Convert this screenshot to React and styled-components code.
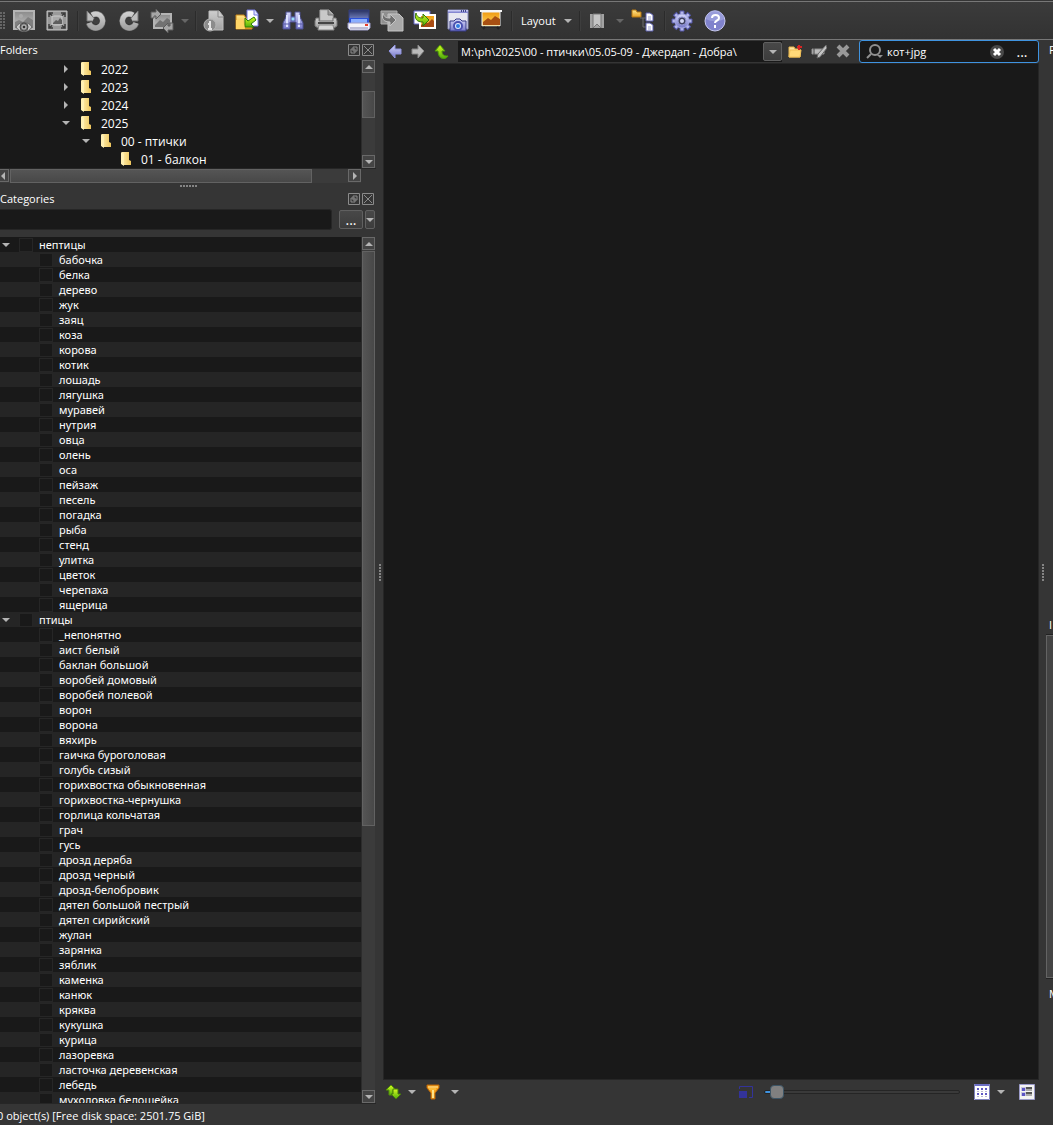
import React from 'react';
import styled, { createGlobalStyle, css } from 'styled-components';

const color = {
  panel: '#353535',
  list: '#191919',
  stripe: '#252525',
  line: '#777777',
  edge: '#262626',
  thumbEdge: '#696969',
  text: '#ffffff',
  arrow: '#b4b4b4',
  focus: '#3f93e0',
};

const animals = [
  'бабочка', 'белка', 'дерево', 'жук', 'заяц', 'коза', 'корова', 'котик', 'лошадь', 'лягушка', 'муравей', 'нутрия',
  'овца', 'олень', 'оса', 'пейзаж', 'песель', 'погадка', 'рыба', 'стенд', 'улитка', 'цветок', 'черепаха', 'ящерица',
];

const birds = [
  '_непонятно', 'аист белый', 'баклан большой', 'воробей домовый', 'воробей полевой', 'ворон', 'ворона', 'вяхирь',
  'гаичка буроголовая', 'голубь сизый', 'горихвостка обыкновенная', 'горихвостка-чернушка', 'горлица кольчатая',
  'грач', 'гусь', 'дрозд деряба', 'дрозд черный', 'дрозд-белобровик', 'дятел большой пестрый', 'дятел сирийский',
  'жулан', 'зарянка', 'зяблик', 'каменка', 'канюк', 'кряква', 'кукушка', 'курица', 'лазоревка',
  'ласточка деревенская', 'лебедь', 'мухоловка белошейка',
];

const categories = [
  { name: 'нептицы', root: true },
  ...animals.map(name => ({ name })),
  { name: 'птицы', root: true },
  ...birds.map(name => ({ name })),
];

const folders = [
  { name: '2022', level: 0, state: 'closed' },
  { name: '2023', level: 0, state: 'closed' },
  { name: '2024', level: 0, state: 'closed' },
  { name: '2025', level: 0, state: 'open' },
  { name: '00 - птички', level: 1, state: 'open' },
  { name: '01 - балкон', level: 2, state: 'leaf' },
];

const GlobalStyle = createGlobalStyle`
  * {
    box-sizing: border-box;
  }

  body {
    margin: 0;
    background: ${color.panel};
    color: ${color.text};
    font: 11px/15px 'Open Sans', 'Noto Sans', sans-serif;
  }

  button, input {
    font: inherit;
    color: inherit;
    margin: 0;
  }

  svg {
    display: block;
    flex: none;
  }
`;

const Window = styled.div`
  display: flex;
  flex-direction: column;
  height: 100vh;
  overflow: hidden;
`;

const Toolbar = styled.div`
  display: flex;
  align-items: center;
  flex: none;
  height: 39px;
  margin-top: 1px;
  border-top: 1px solid ${color.line};
  border-bottom: 1px solid ${color.line};
  background: linear-gradient(#3b3b3b, #323232);
`;

const Grip = styled.div`
  width: 5px;
  height: 18px;
  margin-right: 2px;
  background: repeating-linear-gradient(#666 0 2px, transparent 2px 3px);
  mask: repeating-linear-gradient(90deg, #000 0 2px, transparent 2px 3px);
`;

const Separator = styled.div`
  width: 6px;
  height: 20px;
  border-right: 1px solid #3e3e3e;
  background: linear-gradient(90deg, transparent 4px, #2b2b2b 4px 5px, transparent 5px);
`;

const IconButton = styled.button`
  display: flex;
  align-items: center;
  justify-content: center;
  flex: none;
  width: ${props => props.$width || 33}px;
  height: 24px;
  padding: 0;
  border: 0;
  background: none;
`;

const TextButton = styled.button`
  padding: 0 6px 0 8px;
  border: 0;
  background: none;
`;

const Main = styled.div`
  display: flex;
  flex: 1;
  min-height: 0;
`;

const Sidebar = styled.div`
  display: flex;
  flex-direction: column;
  width: 376px;
  flex: none;
`;

const PanelTitle = styled.div`
  display: flex;
  align-items: center;
  height: 20px;
  flex: none;
  padding-right: 1px;
  line-height: 20px;
`;

const PanelName = styled.span`
  flex: 1;
`;

const ScrollArea = styled.div`
  display: flex;
  flex: ${props => (props.$grow ? '1' : 'none')};
  min-height: 0;
  border-bottom: 1px solid ${color.edge};
`;

const Rows = styled.div`
  flex: 1;
  overflow: hidden;
  background: ${color.list};
`;

const FolderRow = styled.div`
  display: flex;
  align-items: center;
  height: 18px;
  padding-left: ${props => 60 + props.$level * 20}px;
  font-size: 12px;
`;

const Twisty = styled.span`
  display: flex;
  justify-content: center;
  width: ${props => props.$width || 12}px;
`;

const FolderName = styled.span`
  margin-left: 1px;
`;

const CategoryRow = styled.label`
  display: flex;
  align-items: center;
  height: 15px;
  padding-left: ${props => (props.$root ? 0 : 39)}px;
  font-family: 'Noto Sans', sans-serif;

  &:nth-child(even) {
    background: ${color.stripe};
  }
`;

const Check = styled.input`
  appearance: none;
  width: 14px;
  height: 14px;
  margin-left: ${props => (props.$root ? 7 : 0)}px;
  margin-right: 6px;
  border: 1px solid #262626;
  background: ${color.list};
`;

const Bar = styled.div`
  display: flex;
  flex-direction: ${props => (props.$horizontal ? 'row' : 'column')};
  flex: none;
  ${props => (props.$horizontal ? css`height: 14px;` : css`width: 14px;`)}
  margin-left: ${props => (props.$horizontal ? -5 : 0)}px;
  margin-right: ${props => (props.$horizontal ? 15 : 1)}px;
  border-left: 1px solid #2c2c2c;
  background: #3b3b3b;
`;

const BarButton = styled.button`
  display: flex;
  align-items: center;
  justify-content: center;
  width: 13px;
  height: 13px;
  flex: none;
  padding: 0;
  border: 1px solid ${color.thumbEdge};
  background: #444;
`;

const Space = styled.div`
  flex: ${props => props.$part};
`;

const Thumb = styled.div`
  flex: ${props => props.$part};
  margin: ${props => (props.$horizontal ? '0 1px' : '1px 0')};
  border: 1px solid #626262;
  background: linear-gradient(${props => (props.$horizontal ? '180deg' : '90deg')}, #555, #484848);
`;

const Splitter = styled.div`
  display: flex;
  align-items: center;
  justify-content: center;
  flex: none;
  ${props => (props.$vertical ? css`width: 7px;` : css`height: 6px;`)}
`;

const Dots = styled.div`
  width: ${props => (props.$vertical ? 2 : 17)}px;
  height: ${props => (props.$vertical ? 17 : 2)}px;
  background: repeating-linear-gradient(
    ${props => (props.$vertical ? '180deg' : '90deg')},
    #858585 0 2px,
    transparent 2px 3px
  );
`;

const FilterRow = styled.div`
  display: flex;
  align-items: center;
  height: 21px;
  flex: none;
  margin-bottom: 7px;
  padding-right: 1px;
`;

const FilterInput = styled.input`
  flex: 1;
  height: 21px;
  margin-right: 7px;
  padding: 0 4px;
  border: 1px solid ${color.edge};
  border-left: 0;
  border-radius: 0 3px 3px 0;
  background: ${color.list};
`;

const SmallButton = styled.button`
  display: flex;
  align-items: center;
  justify-content: center;
  width: ${props => props.$width}px;
  height: 19px;
  margin-left: ${props => props.$gap || 0}px;
  padding: 0;
  border: 1px solid #606060;
  border-radius: 2px;
  background: linear-gradient(#484848, #3c3c3c);
  font-size: 14px;
`;

const Center = styled.div`
  display: flex;
  flex-direction: column;
  flex: 1;
  min-width: 0;
`;

const AddressRow = styled.div`
  display: flex;
  align-items: center;
  height: 23px;
  flex: none;
`;

const AddressBox = styled.div`
  display: flex;
  align-items: center;
  flex: 1;
  min-width: 0;
  height: 21px;
  margin: 0 1px 0 4px;
  background: ${color.list};
`;

const AddressInput = styled.input`
  flex: 1;
  min-width: 0;
  padding: 0 3px;
  border: 0;
  background: none;
`;

const SearchBox = styled.label`
  display: flex;
  align-items: center;
  width: 180px;
  height: 23px;
  flex: none;
  margin-left: 4px;
  padding: 0 3px 0 6px;
  border: 1px solid ${color.focus};
  border-radius: 3px;
  background: ${color.list};
`;

const SearchInput = styled.input`
  flex: 1;
  min-width: 0;
  padding: 0 2px 0 3px;
  border: 0;
  outline: 0;
  background: none;
`;

const MoreButton = styled(IconButton)`
  font-size: 14px;
`;

const FileList = styled.div`
  flex: 1;
  border: 1px solid ${color.edge};
  background: ${color.list};
`;

const ViewBar = styled.div`
  display: flex;
  align-items: center;
  height: 24px;
  flex: none;
`;

const Spacer = styled.div`
  flex: 1;
`;

const Gap = styled.div`
  width: 8px;
`;

const Zoom = styled.input`
  appearance: none;
  width: 196px;
  height: 14px;
  margin: 0 10px 0 11px;
  background: none;

  &::-webkit-slider-runnable-track {
    height: 4px;
    border: 1px solid #252525;
    border-radius: 2px;
    background: linear-gradient(90deg, ${color.focus} 8px, #3a3a3a 8px);
  }

  &::-webkit-slider-thumb {
    appearance: none;
    width: 14px;
    height: 14px;
    margin-top: -6px;
    border: 1px solid #3c5566;
    border-radius: 4px;
    background: #808080;
  }
`;

const RightDock = styled.div`
  display: flex;
  flex-direction: column;
  width: 7px;
  flex: none;
  overflow: hidden;
`;

const DockTitle = styled.div`
  height: 20px;
  flex: none;
  padding-left: 3px;
  line-height: 20px;
`;

const DockBox = styled.div`
  flex: ${props => props.$part};
  width: 40px;
  ${props =>
    props.$framed &&
    css`
      border: 1px solid #646464;
      background: #444;
      outline: 1px solid #222;
    `}
`;

const Status = styled.div`
  height: 21px;
  flex: none;
  margin-left: -3px;
  line-height: 23px;
`;

const Arrow = ({ dir = 'down', fill = color.arrow, size = 8 }) => {
  const turn = { down: 0, left: 90, up: 180, right: 270 }[dir];
  return (
    <svg width={size} height={size} viewBox="0 0 8 8">
      <path d="M0 2h8L4 6z" fill={fill} transform={`rotate(${turn} 4 4)`} />
    </svg>
  );
};

const Svg = ({ size = 24, children }) => (
  <svg width={size} height={size} viewBox={`0 0 ${size} ${size}`}>
    {children}
  </svg>
);

const HiddenSvg = styled.svg`
  position: absolute;
`;

const Gradients = () => (
  <HiddenSvg width="0" height="0">
    <defs>
      <linearGradient id="grey" x2="0" y2="1">
        <stop offset="0" stopColor="#cecece" />
        <stop offset="1" stopColor="#a2a2a2" />
      </linearGradient>
      <linearGradient id="sky" x2="0" y2="1">
        <stop offset="0" stopColor="#8a8a8a" />
        <stop offset="1" stopColor="#c4c4c4" />
      </linearGradient>
      <linearGradient id="sunset" x2="0" y2="1">
        <stop offset="0" stopColor="#f09a10" />
        <stop offset="1" stopColor="#ffd860" />
      </linearGradient>
      <linearGradient id="violet" x2="0" y2="1">
        <stop offset="0" stopColor="#d6d8fa" />
        <stop offset="1" stopColor="#7476c8" />
      </linearGradient>
      <linearGradient id="gold" x2="0" y2="1">
        <stop offset="0" stopColor="#ffe78c" />
        <stop offset="1" stopColor="#e8a226" />
      </linearGradient>
      <linearGradient id="green" x2="0" y2="1">
        <stop offset="0" stopColor="#d8fb20" />
        <stop offset="1" stopColor="#4fae0c" />
      </linearGradient>
      <linearGradient id="folder" x2="1" y2="0">
        <stop offset="0" stopColor="#ffedab" />
        <stop offset="1" stopColor="#edc55c" />
      </linearGradient>
      <linearGradient id="scan" x2="0" y2="1">
        <stop offset="0" stopColor="#27305f" />
        <stop offset="1" stopColor="#7a88c8" />
      </linearGradient>
    </defs>
  </HiddenSvg>
);

const ViewIcon = () => (
  <Svg>
    <path d="M2 2h20v18H2z" fill="url(#sky)" stroke="#b4b4b4" strokeWidth="2" />
    <circle cx="9" cy="7" r="2" fill="#aaa" />
    <path d="M3 13l4-2 4 2 5-5 5 3v8H3z" fill="#808080" />
    <path d="M4 18c3-6 13-6 16 0-3 6-13 6-16 0z" fill="#c4c4c4" stroke="#666" />
    <circle cx="12" cy="18" r="4" fill="#777" stroke="#4a4a4a" />
    <circle cx="12" cy="18" r="2" fill="#333" stroke="#ccc" />
  </Svg>
);

const FullIcon = () => (
  <Svg>
    <path d="M2 2h20v19H2z" fill="#9a9a9a" stroke="#c4c4c4" />
    <path d="M4 4l5 4M20 4l-5 4M4 19l5-4M20 19l-5-4M4 8V4h4M16 4h4v4M4 15v4h4M16 19h4v-4" stroke="#3c3c3c" fill="none" strokeWidth="1.5" />
    <path d="M7 7h10v9H7z" fill="#aaa" stroke="#ccc" />
    <path d="M8 14l3-3 2 1 2-3 2 2v4H8z" fill="#5e5e5e" />
  </Svg>
);

const RotateIcon = ({ flip }) => (
  <Svg>
    <g transform={flip ? 'translate(24 0) scale(-1 1)' : undefined}>
      <path d="M8 6A7 7 0 1 1 5 14" fill="none" stroke="#777" strokeWidth="6" />
      <path d="M8 6A7 7 0 1 1 5 14" fill="none" stroke="url(#grey)" strokeWidth="5" />
      <path d="M3 2v10h9L9 8 6 5z" fill="#bdbdbd" stroke="#777" />
      <circle cx="12" cy="12" r="3" fill="#404040" />
    </g>
  </Svg>
);

const ResizeIcon = () => (
  <Svg>
    <path d="M4 5h17v14H4z" fill="url(#sky)" stroke="#b4b4b4" strokeWidth="2" />
    <path d="M5 16l5-5 3 2 4-4 3 2v7H5z" fill="#727272" />
    <path d="M1 9V3h5V0l5 5-5 5V7H4v2z" fill="#a6a6a6" stroke="#5c5c5c" />
    <path d="M23 14v7h-5v3l-5-5 5-5v3h2v-3z" fill="#a6a6a6" stroke="#5c5c5c" />
  </Svg>
);

const InfoIcon = () => (
  <Svg>
    <path d="M7 2h10l4 5v14H7z" fill="url(#grey)" stroke="#bdbdbd" />
    <path d="M16 2v6h5" fill="#ccc" stroke="#888" />
    <circle cx="8" cy="16" r="6" fill="#8c8c8c" stroke="#b4b4b4" />
    <path d="M8 12v2M6 15h2v5M6 20h4" stroke="#e4e4e4" strokeWidth="2" fill="none" />
  </Svg>
);

const OpenIcon = () => (
  <Svg>
    <path d="M1 6h8l2 3h6v11H1z" fill="url(#gold)" stroke="#c98516" />
    <path d="M12 1h8l3 4v12H12z" fill="#fff" stroke="#777be0" />
    <path d="M19 1v5h4" fill="#dfe2ff" stroke="#777be0" />
    <path d="M19 8l2 3-5 4 3 3H10V9l3 3z" fill="url(#green)" stroke="#2f7d08" />
    <path d="M1 11h7l2 9H1z" fill="#ffd566" />
  </Svg>
);

const BinocularsIcon = () => (
  <Svg>
    <path d="M5 3h5v5h4V3h5v5l3 6v6h-7v-7H9v7H2v-6l3-6z" fill="url(#violet)" stroke="#4d5192" />
    <path d="M6 6v12M18 6v12" stroke="#dfe4ff" strokeWidth="2" />
    <path d="M10 8h4v4h-4z" fill="#9bdcf8" stroke="#5659a4" />
    <path d="M2 15h7M15 15h7" stroke="#585ba8" />
  </Svg>
);

const PrinterIcon = () => (
  <Svg>
    <path d="M6 1h9l4 4v7H6z" fill="#c9c9c9" stroke="#aaa" />
    <path d="M14 1v5h5" fill="#999" stroke="#777" />
    <path d="M2 9h3v3h14V9h3l1 3v5l-3 2H4l-3-2v-5z" fill="url(#grey)" stroke="#777" />
    <path d="M4 14h16" stroke="#444" strokeWidth="2" />
    <path d="M5 16h14l1 5H4z" fill="#d6d6d6" stroke="#888" />
  </Svg>
);

const ScannerIcon = () => (
  <Svg>
    <path d="M2 1h20v10H2z" fill="url(#scan)" stroke="#343e7d" />
    <path d="M2 9h20v5H2z" fill="#2b50d8" />
    <path d="M4 10h16v4H4z" fill="#8aaeff" />
    <path d="M1 14h22v5l-2 2H3l-2-2z" fill="#f3f3fa" stroke="#9c9cc8" />
    <path d="M3 18h18v2H3z" fill="#bcbcd5" />
    <path d="M18 16h3" stroke="#e83c28" strokeWidth="2" />
  </Svg>
);

const ConvertIcon = ({ page }) => (
  <Svg>
    <path d="M1 2h16v13H1z" fill={page ? '#8f8f8f' : '#fff'} stroke={page ? '#aeaeae' : '#6266c8'} />
    {page ? (
      <path d="M8 5h11l4 4v13H8z" fill="#a9a9a9" stroke="#c4c4c4" />
    ) : (
      <g>
        <path d="M7 6h15v13H7z" fill="url(#sunset)" stroke="#fff" strokeWidth="2" />
        <path d="M8 16l4-3 3 1 4-4 2 2v6H8z" fill="#a84b13" />
      </g>
    )}
    <path
      d="M3 4c1 4 3 5 7 5V5l6 6-6 6v-4c-6 0-9-3-7-9z"
      fill={page ? '#6f6f6f' : 'url(#green)'}
      stroke={page ? '#c6c6c6' : '#35760d'}
    />
  </Svg>
);

const CameraIcon = () => (
  <Svg>
    <path d="M2 1h20v19H2z" fill="#e6e6f0" stroke="#8589bb" />
    <path d="M2 1h20v3H2z" fill="url(#violet)" />
    <path d="M15 2h1M17 2h1M19 2h1" stroke="#40458c" strokeWidth="2" />
    <path d="M4 12h4l2-2h4l2 2h4v10H4z" fill="url(#violet)" stroke="#343985" />
    <circle cx="12" cy="17" r="4" fill="#e1ebff" stroke="#4c52b0" strokeWidth="2" />
    <circle cx="12" cy="17" r="2" fill="#327de1" />
  </Svg>
);

const SlidesIcon = () => (
  <Svg>
    <path d="M3 3h18v14H3z" fill="url(#sunset)" stroke="#eee" />
    <path d="M4 13l5-4 3 2 4-4 5 3v6H4z" fill="#a85012" />
    <path d="M1 2h22" stroke="#f6f6f6" strokeWidth="2" />
    <path d="M2 18h20" stroke="#222" />
    <path d="M4 20l2-2M18 18l2 2" stroke="#222" strokeWidth="2" />
  </Svg>
);

const BookmarkIcon = () => (
  <Svg>
    <path d="M5 5h14v14H5z" fill="#a2a2a2" />
    <path d="M8 5h8v14l-4-4-4 4z" fill="#c4c4c4" stroke="#777" />
  </Svg>
);

const TreeIcon = () => (
  <Svg>
    <path d="M1 1h4l1 2h4v5H1z" fill="url(#gold)" stroke="#b77812" />
    <path d="M9 9h3v9h3M12 9h3" fill="none" stroke="#6c6c6c" />
    <path d="M15 4h4l3 2v6h-7zM15 14h4l3 2v6h-7z" fill="#fff" stroke="#5b5fae" />
    <path d="M17 8h3M17 10h3M17 18h3M17 20h3" stroke="#9ba0cd" />
  </Svg>
);

const GearIcon = () => (
  <Svg>
    {[0, 45, 90, 135].map(angle => (
      <path key={angle} d="M10 2h4v20h-4z" fill="#b4b7ea" stroke="#5053a4" transform={`rotate(${angle} 12 12)`} />
    ))}
    <circle cx="12" cy="12" r="7" fill="url(#violet)" stroke="#a4a8e0" />
    <circle cx="12" cy="12" r="4" fill="#3f415e" stroke="#8d91cc" />
    <circle cx="12" cy="12" r="2" fill="#d5d8f7" />
  </Svg>
);

const HelpIcon = () => (
  <Svg>
    <circle cx="12" cy="12" r="10" fill="#8082cc" stroke="#c8caf0" />
    <path d="M3 10a9 9 0 0 1 18 0c-5 3-13 3-18 0z" fill="#a3a6e0" opacity=".7" />
    <path d="M9 9c0-4 7-4 7 0 0 3-4 2-4 5M12 16v3" fill="none" stroke="#fff" strokeWidth="2" />
  </Svg>
);

const NavArrow = ({ forward }) => (
  <Svg size={16}>
    <path
      d="M2 7l6-6v4h6v5H8v4z"
      fill={forward ? '#bbb' : 'url(#violet)'}
      stroke={forward ? '#888' : '#9093df'}
      transform={forward ? 'translate(16 0) scale(-1 1)' : undefined}
    />
  </Svg>
);

const UpIcon = () => (
  <Svg size={16}>
    <path d="M1 7l5-6 5 6H8c0 4 2 5 6 5-2 4-10 4-10-5z" fill="url(#green)" stroke="#4d9c08" />
  </Svg>
);

const NewFolderIcon = () => (
  <Svg size={16}>
    <path d="M2 3h5l1 2h5v8H2z" fill="#ffe5a0" stroke="#e9b84e" />
    <path d="M3 6h11l-1 7H2z" fill="#ffd978" stroke="#f0bf58" />
    <path d="M12 1v5M10 3h5" stroke="#d62424" strokeWidth="2" />
  </Svg>
);

const RenameIcon = () => (
  <Svg size={16}>
    <path d="M1 5h12v5H1z" fill="#bbb" stroke="#8f8f8f" />
    <path d="M3 6v3M2 5h2M2 10h2" stroke="#444" />
    <path d="M15 1l-8 9-1 4 3-1 7-9z" fill="#c4c4c4" stroke="#666" />
  </Svg>
);

const CrossIcon = () => (
  <Svg size={16}>
    <path d="M3 2l10 10M13 2L3 12" stroke="#999" strokeWidth="4" />
  </Svg>
);

const SearchIcon = () => (
  <Svg size={18}>
    <circle cx="9" cy="7" r="5" fill="none" stroke="#909090" strokeWidth="2" />
    <path d="M5 11l-4 4" stroke="#909090" strokeWidth="2" />
    <path d="M11 12h6l-3 3z" fill="#909090" />
  </Svg>
);

const ClearIcon = () => (
  <Svg size={14}>
    <circle cx="7" cy="7" r="7" fill="#484848" />
    <path d="M4 4l6 6M10 4l-6 6" stroke="#fff" strokeWidth="3" />
  </Svg>
);

const FolderIcon = () => (
  <Svg size={14}>
    <path d="M3 0h7v8l2 1v4H3z" fill="url(#folder)" />
    <path d="M2 0l3 2v12l-3-2z" fill="#fff0b3" />
  </Svg>
);

const DockButtons = () => (
  <>
    <IconButton $width={14} aria-label="Float panel">
      <Svg size={12}>
        <path d="M.5 .5h11v11H.5zM5 3h4v4H5zM3 5h4v4H3z" fill="none" stroke="#8b8b8b" />
      </Svg>
    </IconButton>
    <IconButton $width={14} aria-label="Close panel">
      <Svg size={12}>
        <path d="M.5 .5h11v11H.5zM2 2l8 8M10 2l-8 8" fill="none" stroke="#8b8b8b" />
      </Svg>
    </IconButton>
  </>
);

const SortIcon = () => (
  <Svg size={16}>
    <path d="M0 6l5-5 5 5H7v5H3V6z" fill="url(#green)" stroke="#548f09" />
    <path d="M7 10V5h5v5h3l-5 5-5-5z" fill="url(#green)" stroke="#477d0b" />
  </Svg>
);

const FunnelIcon = () => (
  <Svg size={16}>
    <path d="M2 1h12v3l-4 5v6H6V9L2 4z" fill="#f7a31e" stroke="#b86408" />
    <path d="M3 3h10" stroke="#ffe9a0" />
    <path d="M4 5h7" stroke="#ffd050" />
    <path d="M8 6v8" stroke="#ffe48a" strokeWidth="2" />
  </Svg>
);

const ThumbSizeIcon = () => (
  <Svg size={14}>
    <path d="M.5 4V1.500h13v11H10" fill="none" stroke="#33339a" />
    <path d="M0 6h8v7H0z" fill="#33339a" />
  </Svg>
);

const GridIcon = () => (
  <Svg size={16}>
    <path d="M0 0h16v16H0z" fill="#fff" />
    <path d="M0 1h16" stroke="#6c6fc4" strokeWidth="2" />
    <path d="M.5 0v15.500h15V0" fill="none" stroke="#7f82bd" />
    <path d="M3 5h10M3 10h10" stroke="#6059c4" strokeWidth="2" strokeDasharray="2 2" />
    <path d="M3 7.500h10M3 12.500h10" stroke="#b8b8ce" strokeDasharray="2 2" />
  </Svg>
);

const DetailsIcon = () => (
  <Svg size={16}>
    <path d="M.5 .5h15v15H.5z" fill="#f3f3f3" stroke="#9b9bc8" />
    <path d="M2 3h5v4H2zM2 8h5v4H2z" fill="#c6c6de" />
    <path d="M3 4h3v3H3zM3 9h3v3H3z" fill="#5a52c4" />
    <path d="M7 4h6M7 9h6" stroke="#555" strokeWidth="2" />
    <path d="M7 6h6M7 11h6" stroke="#aaa" strokeWidth="2" />
  </Svg>
);

const Tool = ({ label, width, children }) => (
  <IconButton type="button" aria-label={label} $width={width}>
    {children}
  </IconButton>
);

const Drop = ({ label, muted }) => (
  <Tool label={label} width={13}>
    <Arrow fill={muted ? '#666' : color.arrow} />
  </Tool>
);

const Scroll = ({ before, thumb, after, horizontal }) => (
  <Bar $horizontal={horizontal}>
    <BarButton aria-label="Scroll back">
      <Arrow dir={horizontal ? 'left' : 'up'} />
    </BarButton>
    <Space $part={before} />
    <Thumb $part={thumb} $horizontal={horizontal} />
    <Space $part={after} />
    <BarButton aria-label="Scroll forward">
      <Arrow dir={horizontal ? 'right' : 'down'} />
    </BarButton>
  </Bar>
);

const MainToolbar = () => (
  <Toolbar>
    <Grip />
    <Tool label="View"><ViewIcon /></Tool>
    <Tool label="Full screen"><FullIcon /></Tool>
    <Separator />
    <Tool label="Rotate left"><RotateIcon /></Tool>
    <Tool label="Rotate right"><RotateIcon flip /></Tool>
    <Tool label="Transform"><ResizeIcon /></Tool>
    <Drop label="Transform options" muted />
    <Separator />
    <Tool label="Properties"><InfoIcon /></Tool>
    <Tool label="Open"><OpenIcon /></Tool>
    <Drop label="Open options" />
    <Tool label="Find"><BinocularsIcon /></Tool>
    <Tool label="Print"><PrinterIcon /></Tool>
    <Tool label="Scan"><ScannerIcon /></Tool>
    <Tool label="Convert"><ConvertIcon page /></Tool>
    <Tool label="Batch convert"><ConvertIcon /></Tool>
    <Tool label="Capture"><CameraIcon /></Tool>
    <Tool label="Slideshow"><SlidesIcon /></Tool>
    <Separator />
    <TextButton type="button">Layout</TextButton>
    <Drop label="Layout options" />
    <Separator />
    <Tool label="Bookmark"><BookmarkIcon /></Tool>
    <Drop label="Bookmark options" muted />
    <Tool label="Folder tree"><TreeIcon /></Tool>
    <Separator />
    <Tool label="Settings"><GearIcon /></Tool>
    <Tool label="Help"><HelpIcon /></Tool>
  </Toolbar>
);

const FoldersPanel = () => (
  <>
    <PanelTitle>
      <PanelName>Folders</PanelName>
      <DockButtons />
    </PanelTitle>
    <ScrollArea>
      <Rows>
        {folders.map(({ name, level, state }) => (
          <FolderRow key={name} $level={level}>
            <Twisty>{state !== 'leaf' && <Arrow dir={state === 'open' ? 'down' : 'right'} />}</Twisty>
            <Twisty $width={28}><FolderIcon /></Twisty>
            <FolderName>{name}</FolderName>
          </FolderRow>
        ))}
      </Rows>
      <Scroll before={17} thumb={26} after={37} />
    </ScrollArea>
    <Scroll horizontal before={0} thumb={302} after={35} />
    <Splitter><Dots /></Splitter>
  </>
);

const CategoriesPanel = () => (
  <>
    <PanelTitle>
      <PanelName>Categories</PanelName>
      <DockButtons />
    </PanelTitle>
    <FilterRow>
      <FilterInput aria-label="Filter categories" />
      <SmallButton $width={24}>...</SmallButton>
      <SmallButton $width={10} $gap={2} aria-label="Filter options"><Arrow /></SmallButton>
    </FilterRow>
    <ScrollArea $grow>
      <Rows>
        {categories.map(({ name, root }) => (
          <CategoryRow key={name} $root={root}>
            {root && <Twisty><Arrow /></Twisty>}
            <Check type="checkbox" $root={root} />
            {name}
          </CategoryRow>
        ))}
      </Rows>
      <Scroll before={0} thumb={575} after={264} />
    </ScrollArea>
  </>
);

const Browser = () => (
  <Center>
    <AddressRow>
      <Tool label="Back" width={23}><NavArrow /></Tool>
      <Tool label="Forward" width={24}><NavArrow forward /></Tool>
      <Tool label="Up" width={24}><UpIcon /></Tool>
      <AddressBox>
        <AddressInput aria-label="Path" defaultValue="M:\ph\2025\00 - птички\05.05-09 - Джердап - Добра\" />
        <SmallButton $width={19} aria-label="Path history"><Arrow /></SmallButton>
      </AddressBox>
      <Tool label="New folder" width={24}><NewFolderIcon /></Tool>
      <Tool label="Rename" width={24}><RenameIcon /></Tool>
      <Tool label="Delete" width={24}><CrossIcon /></Tool>
      <SearchBox>
        <SearchIcon />
        <SearchInput aria-label="Search" defaultValue="кот+jpg" />
        <Tool label="Clear" width={24}><ClearIcon /></Tool>
        <MoreButton type="button" $width={26}>...</MoreButton>
      </SearchBox>
    </AddressRow>
    <FileList />
    <ViewBar>
      <Tool label="Sort" width={22}><SortIcon /></Tool>
      <Drop label="Sort options" />
      <Tool label="Filter" width={30}><FunnelIcon /></Tool>
      <Drop label="Filter options" />
      <Spacer />
      <ThumbSizeIcon />
      <Zoom type="range" aria-label="Thumbnail size" min="0" max="100" defaultValue="3" />
      <Tool label="Thumbnails" width={24}><GridIcon /></Tool>
      <Drop label="View options" />
      <Gap />
      <Tool label="Details" width={24}><DetailsIcon /></Tool>
    </ViewBar>
  </Center>
);

const App = () => (
  <Window>
    <GlobalStyle />
    <Gradients />
    <MainToolbar />
    <Main>
      <Sidebar>
        <FoldersPanel />
        <CategoriesPanel />
      </Sidebar>
      <Splitter $vertical><Dots $vertical /></Splitter>
      <Browser />
      <Splitter $vertical><Dots $vertical /></Splitter>
      <RightDock>
        <DockTitle>P</DockTitle>
        <DockBox $part={556} />
        <DockTitle>I</DockTitle>
        <DockBox $part={341} $framed />
        <Splitter />
        <DockTitle>M</DockTitle>
        <DockBox $part={100} />
      </RightDock>
    </Main>
    <Status>0 object(s) [Free disk space: 2501.75 GiB]</Status>
  </Window>
);

export default App;
